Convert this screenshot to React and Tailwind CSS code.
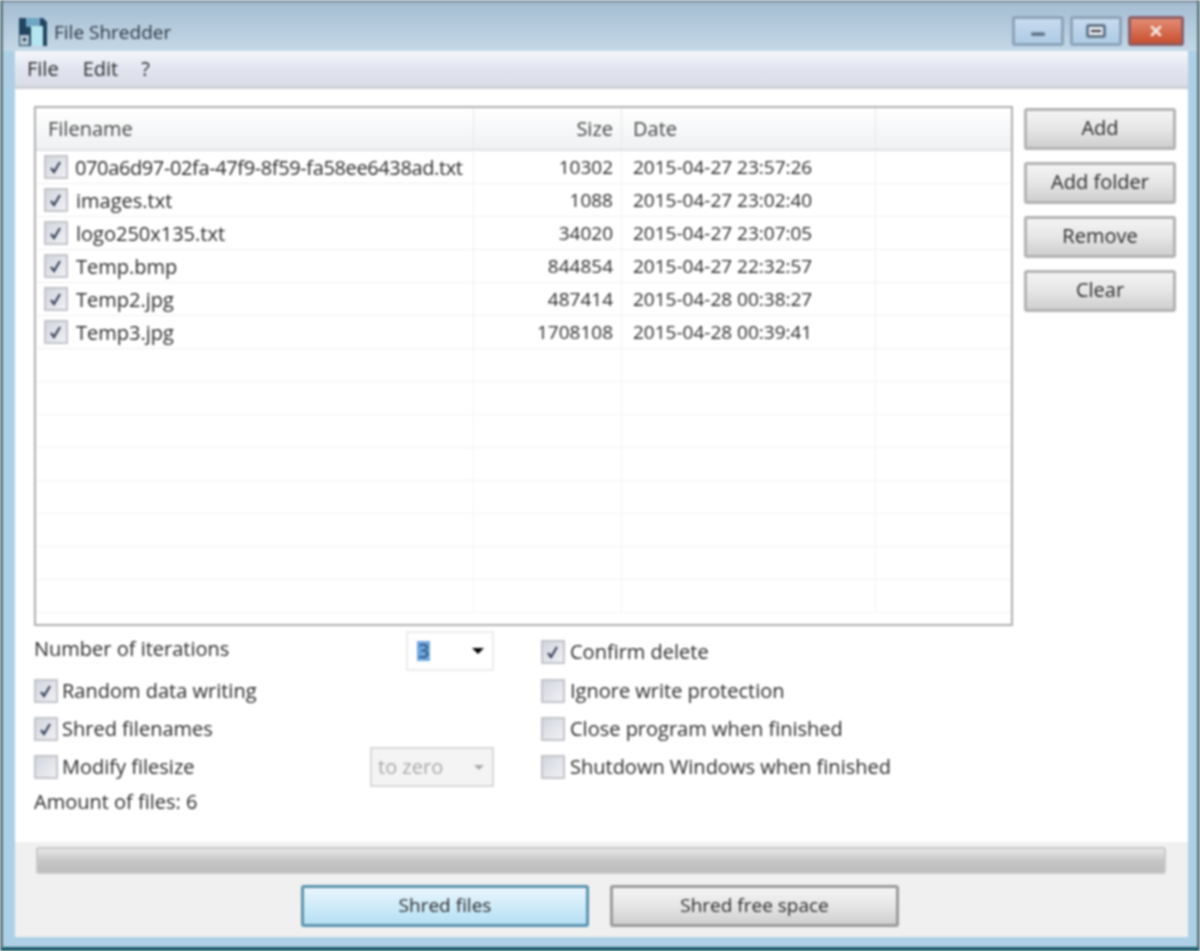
import React from 'react';
import { Minus, X } from 'lucide-react';

const files = [
  { name: '070a6d97-02fa-47f9-8f59-fa58ee6438ad.txt', size: '10302', date: '2015-04-27 23:57:26', tight: true },
  { name: 'images.txt', size: '1088', date: '2015-04-27 23:02:40' },
  { name: 'logo250x135.txt', size: '34020', date: '2015-04-27 23:07:05' },
  { name: 'Temp.bmp', size: '844854', date: '2015-04-27 22:32:57' },
  { name: 'Temp2.jpg', size: '487414', date: '2015-04-28 00:38:27' },
  { name: 'Temp3.jpg', size: '1708108', date: '2015-04-28 00:39:41' },
];
const emptyRows = Array.from({ length: 8 }, (_, i) => i);

function Check({ checked }) {
  return (
    <span className="flex w-[24px] h-[24px] shrink-0 items-center justify-center border-2 border-[#c2c4ca] bg-gradient-to-br from-[#d3d6de] to-[#f0f1f4]">
      {checked && (
        <svg viewBox="0 0 16 16" className="w-[16px] h-[16px]" fill="none" stroke="#3c4560" strokeWidth="2.2">
          <path d="M3 9l3 4 6-10" />
        </svg>
      )}
    </span>
  );
}

function Option({ checked, label, gap = 'gap-[5px]' }) {
  return (
    <div className={`flex items-center h-[38px] ${gap}`}>
      <Check checked={checked} />
      <span className="mt-[-1px]">{label}</span>
    </div>
  );
}

function SideButton({ label }) {
  return (
    <div className="flex h-[42px] items-center justify-center rounded-[3px] border-[3px] border-[#b2b2b2] bg-gradient-to-b from-[#f4f4f4] via-[#e6e6e6] to-[#cfcfcf] pb-[3px] font-medium text-[#2a2a2a]">
      {label}
    </div>
  );
}

function WinButton({ className, children }) {
  return (
    <div className={`flex h-[30px] items-center justify-center rounded-[3px] border-[3px] ${className}`}>
      {children}
    </div>
  );
}

export default function App() {
  return (
    <div className="flex h-[951px] w-[1200px] flex-col overflow-hidden border-x-[3px] border-b-[4px] border-x-[#5f7a80] border-b-[#1d5a6c] bg-[#aed0e6] blur-[0.8px] text-[20px] leading-none text-[#2a2a2a] font-['Open_Sans',sans-serif]">
      <div className="flex h-[51px] shrink-0 items-center justify-between border-t-[3px] border-[#8b9cab] bg-gradient-to-b from-[#a5bed3] to-[#c4d8e7] pl-[15px] pr-[13px] pt-[10px]">
        <div className="flex items-center gap-[6px]">
          <svg viewBox="0 0 30 30" className="h-[30px] w-[30px]">
            <path d="M1 1h24l4 4v24H1z" fill="#21445f" />
            <rect x="8" y="1" width="14" height="9" fill="#6fa6c4" />
            <rect x="13" y="9" width="12" height="20" fill="#b4e6ef" />
            <rect x="2" y="18" width="9" height="10" fill="#b9c8d2" />
            <rect x="5" y="21" width="3" height="3" fill="#21445f" />
          </svg>
          <span className="text-[19px] font-medium text-[#2c3540]">File Shredder</span>
        </div>
        <div className="mt-[-2px] flex gap-[6px]">
          <WinButton className="w-[52px] border-[#8da3b8] bg-gradient-to-b from-[#c8dbee] to-[#aecbe6]">
            <Minus className="mt-[6px] h-[18px] w-[24px] text-[#66788a]" strokeWidth={5} />
          </WinButton>
          <WinButton className="w-[52px] border-[#8da3b8] bg-gradient-to-b from-[#c8dbee] to-[#aecbe6]">
            <span className="flex h-[14px] w-[20px] items-center justify-center rounded-[3px] border-[3px] border-[#66788a] bg-[#e6edf3]">
              <span className="h-[2px] w-[10px] bg-[#333]" />
            </span>
          </WinButton>
          <WinButton className="w-[56px] border-[#8d5f66] bg-gradient-to-b from-[#e28b72] to-[#c94f2e]">
            <X className="h-[16px] w-[16px] text-[#f4e6e0]" strokeWidth={4} />
          </WinButton>
        </div>
      </div>

      <div className="flex min-h-0 flex-1 flex-col pb-[10px] pl-[12px] pr-[9px]">
        <div className="flex h-[38px] shrink-0 items-center gap-[24px] border-b-[3px] border-[#cfcfd6] bg-gradient-to-b from-[#f5f7fb] via-[#e2e5f0] to-[#dadde8] pl-[12px]">
          <span>File</span>
          <span>Edit</span>
          <span className="ml-[-1px]">?</span>
        </div>

        <div className="flex h-[753px] shrink-0 flex-col bg-white pl-[19px] pr-[12px] pt-[17px]">
          <div className="flex items-start gap-[11px]">
            <div className="flex h-[520px] w-[979px] shrink-0 flex-col border-2 border-[#aeaeae]">
              <div className="grid h-[43px] shrink-0 grid-cols-[438px_148px_254px_1fr] border-b-2 border-[#e3e3e3] bg-gradient-to-b from-white to-[#eff1f3] text-[#444]">
                <div className="flex items-center border-r border-[#e8e8e8] pl-[12px]">Filename</div>
                <div className="flex items-center justify-end border-r border-[#e8e8e8] pr-[8px]">Size</div>
                <div className="flex items-center border-r border-[#e8e8e8] pl-[11px]">Date</div>
                <div />
              </div>
              {files.map((f) => (
                <div key={f.name} className="grid h-[33px] shrink-0 grid-cols-[438px_148px_254px_1fr] border-b border-[#f1f1f1]">
                  <div className="flex items-center border-r border-[#f1f1f1] pl-[8px]">
                    <Check checked />
                    <span className={`whitespace-nowrap pt-[1px] ${f.tight ? 'ml-[7px] tracking-[-0.38px]' : 'ml-[8px]'}`}>{f.name}</span>
                  </div>
                  <div className="flex items-center justify-end border-r border-[#f1f1f1] pr-[8px] pt-[1px] text-[19px]">{f.size}</div>
                  <div className="flex items-center whitespace-nowrap border-r border-[#f1f1f1] pl-[11px] pt-[1px] text-[19px]">{f.date}</div>
                  <div />
                </div>
              ))}
              {emptyRows.map((i) => (
                <div key={i} className="grid h-[33px] shrink-0 grid-cols-[438px_148px_254px_1fr] border-b border-[#f4f4f4]">
                  <div className="border-r border-[#f4f4f4]" />
                  <div className="border-r border-[#f4f4f4]" />
                  <div className="border-r border-[#f4f4f4]" />
                  <div />
                </div>
              ))}
            </div>
            <div className="flex w-[152px] shrink-0 flex-col gap-[12px] pt-[2px]">
              <SideButton label="Add" />
              <SideButton label="Add folder" />
              <SideButton label="Remove" />
              <SideButton label="Clear" />
            </div>
          </div>

          <div className="mt-[3px] flex">
            <div className="w-[460px] shrink-0">
              <div className="flex h-[43px] items-center justify-between">
                <span className="mt-[-3px]">Number of iterations</span>
                <div className="flex h-[40px] w-[88px] items-center justify-between border-2 border-[#ececec] pl-[9px] pr-[8px]">
                  <span className="bg-[#6fa8e0] px-[1px] text-[#2a4a70]">3</span>
                  <span className="h-0 w-0 border-x-[6px] border-t-[6px] border-x-transparent border-t-black" />
                </div>
              </div>
              <Option checked label="Random data writing" gap="gap-[4px]" />
              <Option checked label="Shred filenames" gap="gap-[4px]" />
              <div className="flex h-[38px] items-center justify-between">
                <div className="flex items-center gap-[4px]">
                  <Check />
                  <span className="mt-[-1px]">Modify filesize</span>
                </div>
                <div className="flex h-[40px] w-[124px] items-center justify-between border-2 border-[#d8d8d8] bg-[#f4f4f4] pl-[6px] pr-[8px] text-[#a8a8a8]">
                  <span>to zero</span>
                  <span className="h-0 w-0 border-x-[5px] border-t-[5px] border-x-transparent border-t-[#a8a8a8]" />
                </div>
              </div>
              <div className="flex h-[32px] items-center">Amount of files: 6</div>
            </div>
            <div className="ml-[47px]">
              <div className="flex h-[43px] items-center gap-[5px] pt-[2px]">
                <Check checked />
                <span>Confirm delete</span>
              </div>
              <Option label="Ignore write protection" />
              <Option label="Close program when finished" />
              <Option label="Shutdown Windows when finished" />
            </div>
          </div>
        </div>

        <div className="flex min-h-0 flex-1 flex-col bg-[#f0f0f0] pl-[21px] pr-[7px] pt-[5px]">
          <div className="h-[27px] w-[1130px] shrink-0 rounded-[3px] border-2 border-[#c9c9c9] bg-gradient-to-b from-[#e9e9e9] via-[#c6c6c6] to-[#bdbdbd]" />
          <div className="mt-[11px] flex gap-[21px] pl-[265px]">
            <div className="flex h-[42px] w-[288px] items-center justify-center rounded-[3px] border-[3px] border-[#5b93ad] bg-gradient-to-b from-[#e9f6fd] to-[#b5e0f4] pb-[2px] text-[19px] font-medium text-[#2a2a2a]">
              Shred files
            </div>
            <div className="flex h-[42px] w-[289px] items-center justify-center rounded-[3px] border-[3px] border-[#9a9a9a] bg-gradient-to-b from-[#f4f4f4] via-[#e6e6e6] to-[#cfcfcf] pb-[2px] text-[19px] font-medium text-[#2a2a2a]">
              Shred free space
            </div>
          </div>
        </div>
      </div>
    </div>
  );
}
